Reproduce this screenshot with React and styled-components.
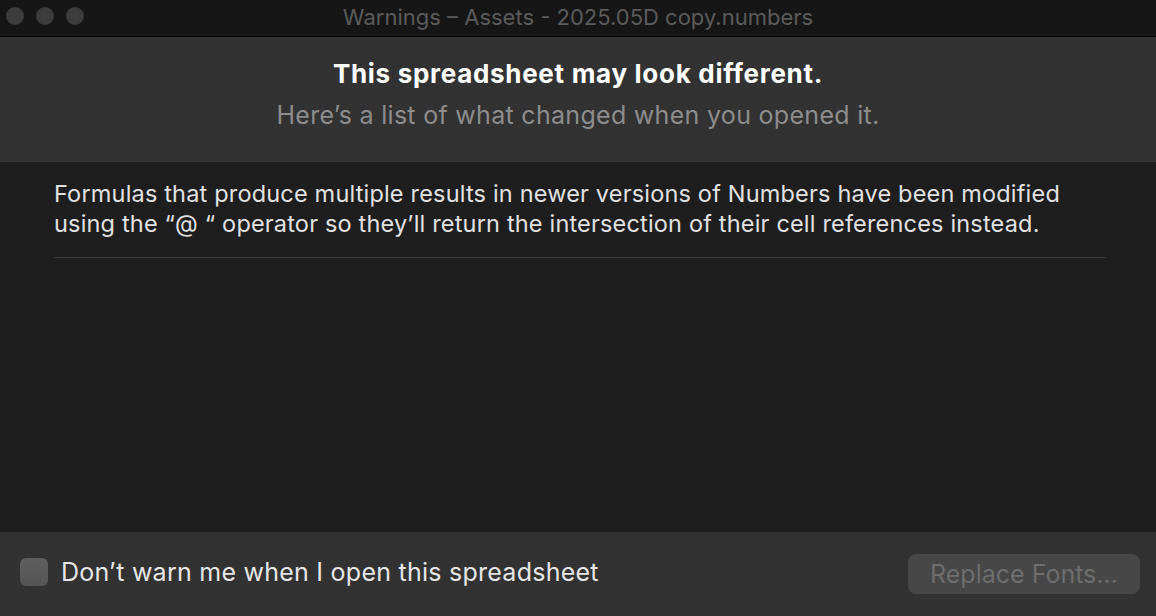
import styled, { createGlobalStyle } from 'styled-components'

const fontUI = 'Inter, "Noto Sans", "Liberation Sans", sans-serif'

const GlobalStyle = createGlobalStyle`
  html, body {
    margin: 0;
    padding: 0;
    background: #1e1e1e;
  }
  #root {
    height: 616px;
  }
`

const Window = styled.div`
  display: flex;
  flex-direction: column;
  width: 1156px;
  height: 616px;
  font-family: ${fontUI};
  background-color: #1e1e1e;
  overflow: hidden;
`

const TitleBar = styled.div`
  position: relative;
  display: flex;
  align-items: center;
  justify-content: center;
  height: 36px;
  flex-shrink: 0;
  background-color: #161616;
  border-bottom: 1px solid #000;
`

const Lights = styled.div`
  position: absolute;
  left: 6px;
  top: 7px;
  display: flex;
  gap: 12px;
`

const Light = styled.span`
  width: 18px;
  height: 18px;
  border-radius: 50%;
  background-color: #3d3d3d;
`

const WindowTitle = styled.span`
  font-size: 22px;
  color: #5b5b5b;
  margin-top: -2px;
`

const Header = styled.div`
  display: flex;
  flex-direction: column;
  align-items: center;
  height: 125px;
  flex-shrink: 0;
  padding-top: 22px;
  box-sizing: border-box;
  background-color: #323232;
`

const Heading = styled.h1`
  margin: 0;
  font-size: 26px;
  font-weight: 700;
  letter-spacing: 0.7px;
  color: #ffffff;
  line-height: 30px;
`

const Subheading = styled.p`
  margin: 11px 0 0;
  font-size: 25px;
  font-weight: 400;
  letter-spacing: 0.3px;
  color: #8d8d8d;
  line-height: 30px;
`

const Body = styled.div`
  flex: 1;
  padding: 17px 50px 0 54px;
  background-color: #1e1e1e;
`

const Warning = styled.p`
  margin: 0;
  padding-bottom: 18px;
  font-size: 23.5px;
  letter-spacing: 0.18px;
  line-height: 30px;
  color: #e2e2e2;
  border-bottom: 1px solid #3c3c3c;
`

const Footer = styled.div`
  display: flex;
  align-items: center;
  justify-content: space-between;
  height: 84px;
  flex-shrink: 0;
  padding: 0 16px 4px 20px;
  box-sizing: border-box;
  background-color: #323232;
`

const CheckLabel = styled.label`
  display: flex;
  align-items: center;
  gap: 13px;
  font-size: 25px;
  letter-spacing: 0.25px;
  color: #e6e6e6;
`

const Checkbox = styled.span`
  width: 28px;
  height: 28px;
  border-radius: 6px;
  background: linear-gradient(#5e5e5e, #555555);
`

const Button = styled.button`
  width: 232px;
  height: 40px;
  margin-top: 4px;
  border: none;
  border-radius: 8px;
  font-family: ${fontUI};
  font-size: 25px;
  color: #6e6e6e;
  background-color: #474747;
`

function App() {
  return (
    <>
      <GlobalStyle />
      <Window>
        <TitleBar>
          <Lights>
            <Light />
            <Light />
            <Light />
          </Lights>
          <WindowTitle>Warnings – Assets - 2025.05D copy.numbers</WindowTitle>
        </TitleBar>

        <Header>
          <Heading>This spreadsheet may look different.</Heading>
          <Subheading>Here’s a list of what changed when you opened it.</Subheading>
        </Header>

        <Body>
          <Warning>
            Formulas that produce multiple results in newer versions of Numbers have been modified
            <br />
            using the “@ “ operator so they’ll return the intersection of their cell references instead.
          </Warning>
        </Body>

        <Footer>
          <CheckLabel>
            <Checkbox />
            Don’t warn me when I open this spreadsheet
          </CheckLabel>
          <Button disabled>Replace Fonts…</Button>
        </Footer>
      </Window>
    </>
  )
}

export default App
